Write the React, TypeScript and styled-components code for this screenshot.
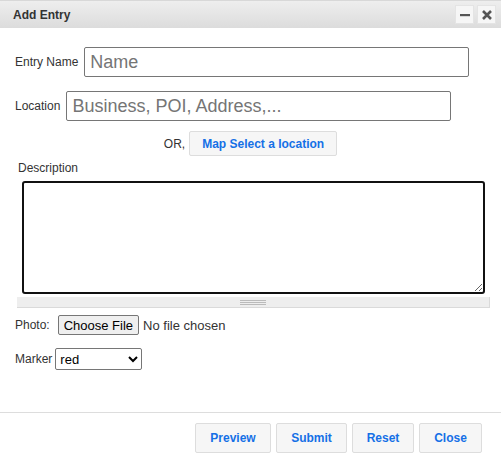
import React from 'react'
import styled, { createGlobalStyle } from 'styled-components'

const Global = createGlobalStyle`
  html, body {
    margin: 0;
    padding: 0;
    background: #fff;
  }
  body {
    font-family: "Liberation Sans", Arial, sans-serif;
  }
`

const Dialog = styled.div`
  width: 501px;
  height: 463px;
  box-sizing: border-box;
  display: flex;
  flex-direction: column;
  background: #fff;
  color: #333;
  font-size: 12px;
  overflow: hidden;
`

const TitleBar = styled.div`
  height: 28px;
  flex: none;
  box-sizing: border-box;
  border-top: 1px solid #d8d8d8;
  background: linear-gradient(#eeeeee, #dcdcdc);
  display: flex;
  align-items: center;
  justify-content: space-between;
  padding: 0 5px 0 13px;
`

const Title = styled.span`
  font-weight: bold;
  font-size: 12px;
  color: #333;
`

const TitleButtons = styled.div`
  display: flex;
  gap: 3px;
`

const IconButton = styled.button`
  width: 19px;
  height: 19px;
  padding: 0;
  border: 1px solid #e4e4e4;
  background: #f6f6f6;
  display: flex;
  align-items: center;
  justify-content: center;
`

const Body = styled.div`
  flex: 1;
  padding: 19px 0 0 15px;
`

const Row = styled.div<{ $top?: number }>`
  display: flex;
  align-items: center;
  margin-top: ${(p) => p.$top ?? 0}px;
`

const Label = styled.label<{ $gap: number }>`
  font-size: 12px;
  color: #333;
  margin-right: ${(p) => p.$gap}px;
`

const TextInput = styled.input<{ $width: number }>`
  width: ${(p) => p.$width}px;
  height: 30px;
  box-sizing: border-box;
  border: 1px solid #767676;
  border-radius: 2px;
  padding: 0 5px;
  font-family: "Liberation Sans", Arial, sans-serif;
  font-size: 18px;
  color: #333;
  &::placeholder {
    color: #757575;
  }
`

const OrRow = styled.div`
  display: flex;
  align-items: center;
  justify-content: center;
  gap: 4px;
  margin: 10px 15px 0 0;
`

const ActionButton = styled.button<{ $width: number; $small?: boolean }>`
  width: ${(p) => p.$width}px;
  height: ${(p) => (p.$small ? 25 : 30)}px;
  box-sizing: border-box;
  background: #f6f6f6;
  border: 1px solid #dddddd;
  border-radius: 2px;
  color: #1570e6;
  font-family: "Liberation Sans", Arial, sans-serif;
  font-weight: bold;
  font-size: 12px;
  padding: 0;
`

const DescLabel = styled.div`
  margin: 5px 0 0 3px;
  font-size: 12px;
  color: #333;
`

const TextArea = styled.textarea`
  display: block;
  margin: 6px 0 0 7px;
  width: 463px;
  height: 113px;
  box-sizing: border-box;
  border: 2px solid #111;
  border-radius: 3px;
  resize: both;
  outline: none;
`

const Resizer = styled.div`
  margin: 3px 0 0 2px;
  width: 473px;
  height: 11px;
  box-sizing: border-box;
  background: #eeeeee;
  border-bottom: 1px solid #dadada;
  border-right: 1px solid #dadada;
  display: flex;
  justify-content: center;
  align-items: center;
`

const Grip = styled.div`
  width: 26px;
  height: 5px;
  border-top: 1px solid #bbb;
  border-bottom: 1px solid #bbb;
  box-sizing: border-box;
  position: relative;
  &::after {
    content: '';
    position: absolute;
    left: 0;
    right: 0;
    top: 1px;
    border-top: 1px solid #bbb;
  }
`

const FileButton = styled.button`
  height: 20px;
  padding: 0 5px;
  font-family: "Liberation Sans", Arial, sans-serif;
  font-size: 13px;
  color: #000;
  background: #efefef;
  border: 1px solid #767676;
  border-radius: 2px;
  margin-right: 4px;
`

const FileText = styled.span`
  font-size: 13px;
  color: #333;
`

const Select = styled.select`
  width: 87px;
  height: 22px;
  font-family: "Liberation Sans", Arial, sans-serif;
  font-size: 13px;
  color: #000;
  border: 1px solid #767676;
  border-radius: 2px;
  background: #fff;
`

const Footer = styled.div`
  flex: none;
  height: 51px;
  box-sizing: border-box;
  border-top: 1px solid #dddddd;
  display: flex;
  justify-content: flex-end;
  align-items: flex-start;
  gap: 5px;
  padding: 10px 19px 0 0;
`

export default function App() {
  return (
    <>
      <Global />
      <Dialog>
        <TitleBar>
          <Title>Add Entry</Title>
          <TitleButtons>
            <IconButton aria-label="minimize">
              <svg width="10" height="10" viewBox="0 0 10 10">
                <rect x="0" y="4" width="10" height="2.2" fill="#555" />
              </svg>
            </IconButton>
            <IconButton aria-label="close">
              <svg width="10" height="10" viewBox="0 0 10 10">
                <path d="M1 1 L9 9 M9 1 L1 9" stroke="#555" strokeWidth="2.6" />
              </svg>
            </IconButton>
          </TitleButtons>
        </TitleBar>
        <Body>
          <Row>
            <Label $gap={6}>Entry Name</Label>
            <TextInput $width={385} placeholder="Name" />
          </Row>
          <Row $top={14}>
            <Label $gap={6}>Location</Label>
            <TextInput $width={385} placeholder="Business, POI, Address,..." />
          </Row>
          <OrRow>
            <span>OR,</span>
            <ActionButton $width={148} $small>
              Map Select a location
            </ActionButton>
          </OrRow>
          <DescLabel>Description</DescLabel>
          <TextArea />
          <Resizer>
            <Grip />
          </Resizer>
          <Row $top={7}>
            <Label $gap={8}>Photo:</Label>
            <FileButton>Choose File</FileButton>
            <FileText>No file chosen</FileText>
          </Row>
          <Row $top={13}>
            <Label $gap={3}>Marker</Label>
            <Select defaultValue="red">
              <option>red</option>
              <option>blue</option>
              <option>green</option>
            </Select>
          </Row>
        </Body>
        <Footer>
          <ActionButton $width={76}>Preview</ActionButton>
          <ActionButton $width={71}>Submit</ActionButton>
          <ActionButton $width={62}>Reset</ActionButton>
          <ActionButton $width={63}>Close</ActionButton>
        </Footer>
      </Dialog>
    </>
  )
}
